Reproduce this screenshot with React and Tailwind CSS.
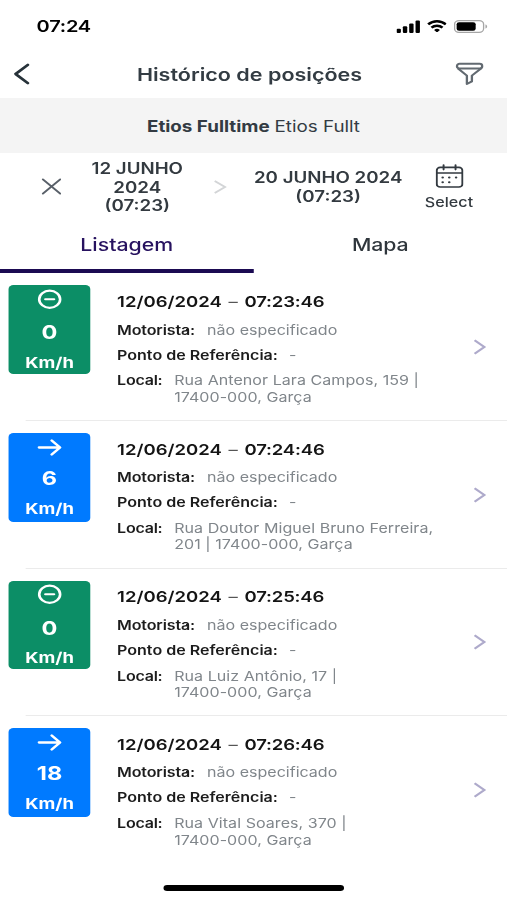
const ROWS = [
  { time: '07:23:46', speed: 0, place: ['Rua Antenor Lara Campos, 159 |', '17400-000, Garça'] },
  { time: '07:24:46', speed: 6, place: ['Rua Doutor Miguel Bruno Ferreira,', '201 | 17400-000, Garça'] },
  { time: '07:25:46', speed: 0, place: ['Rua Luiz Antônio, 17 |', '17400-000, Garça'] },
  { time: '07:26:46', speed: 18, place: ['Rua Vital Soares, 370 |', '17400-000, Garça'] },
];

function StatusBar() {
  return (
    <div className="flex h-[52px] items-center justify-between pl-[30px] pr-[16px] text-black">
      <span className="pt-px text-[16.4px] font-semibold tracking-[-0.2px]">07:24</span>
      <div className="flex items-center gap-[5.3px]">
        <svg className="h-[13px] w-[19.5px]" viewBox="0 0 19.5 12" fill="currentColor" preserveAspectRatio="none">
          <rect x="0" y="8" width="3.6" height="4" rx="1" />
          <rect x="5.2" y="5.8" width="3.6" height="6.2" rx="1" />
          <rect x="10.4" y="3.2" width="3.6" height="8.8" rx="1" />
          <rect x="15.6" y="0.4" width="3.6" height="11.6" rx="1" />
        </svg>
        <svg className="h-[12.5px] w-[16.4px]" viewBox="0 0 17 12" fill="none" stroke="currentColor" strokeWidth="2.3" preserveAspectRatio="none">
          <path d="M1 4.3a10.7 10.7 0 0 1 15 0" />
          <path d="M3.8 7.4a6.7 6.7 0 0 1 9.4 0" />
          <path d="M8.5 12 6 9.7a3.5 3.5 0 0 1 5 0Z" fill="currentColor" stroke="none" />
        </svg>
        <svg className="h-[13px] w-[28px]" viewBox="0 0 28 13">
          <rect x="0.6" y="0.6" width="23.8" height="11.8" rx="3.6" fill="none" stroke="#a6a6a6" strokeWidth="1.1" />
          <rect x="2.3" y="2.3" width="15.6" height="8.4" rx="2" fill="#000" />
          <path d="M25.9 4.4v4.2c.9-.4 1.4-1.1 1.4-2.1s-.5-1.7-1.4-2.1Z" fill="#a6a6a6" />
        </svg>
      </div>
    </div>
  );
}

function Header() {
  return (
    <div className="flex h-[46px] items-center justify-between pb-[2px] pl-[10.5px] pr-[18.5px]">
      <svg className="h-[22px] w-[14px]" viewBox="0 0 14 22" fill="none" stroke="#27323a" strokeWidth="2.5" strokeLinecap="round" strokeLinejoin="round">
        <path d="M11.8 1.8 1.8 11l10 9.2" />
      </svg>
      <h1 className="ml-[11.5px] pt-[1.5px] text-[17.65px] font-semibold text-[#333c43]">Histórico de posições</h1>
      <svg className="h-[24px] w-[24px]" viewBox="0 0 24 24" fill="none" stroke="#626a71" strokeWidth="1.9" strokeLinejoin="round">
        <rect x="1.6" y="1.8" width="20.6" height="4.7" rx="2.1" />
        <path d="M2.2 6.2 9.7 13.6v8.4l4.1-2.6v-5.8l7.7-7.4" />
      </svg>
    </div>
  );
}

function Period() {
  return (
    <div className="flex h-[71px] text-[15.35px] font-semibold leading-[18.6px] text-[#333a40]">
      <div className="flex w-[65px] items-center justify-end pr-[15px]">
        <svg className="mt-[-4px] h-[17px] w-[16.5px]" viewBox="0 0 17 17" stroke="#596069" strokeWidth="1.8" strokeLinecap="round">
          <path d="m1.2 1.2 14.6 14.6M15.8 1.2 1.2 15.8" />
        </svg>
      </div>
      <div className="w-[95px] pt-[7px] text-center">12 JUNHO<br />2024<br />(07:23)</div>
      <div className="flex w-[41px] items-center justify-center pb-[4px]">
        <svg className="h-[14px] w-[11px]" viewBox="0 0 11 14" fill="none" stroke="#d3d5d7" strokeWidth="1.7">
          <path d="m1 1 8.5 6L1 13" />
        </svg>
      </div>
      <div className="w-[136px] pt-[16px] text-center">20 JUNHO 2024<br />(07:23)</div>
      <div className="flex w-[62px] flex-col items-center pt-[11px]">
        <svg className="h-[24px] w-[23px]" viewBox="0 0 23 24" fill="none" stroke="#333a40" strokeWidth="1.6" strokeLinecap="round">
          <rect x="1" y="3.4" width="21" height="19.6" rx="2.8" />
          <path d="M1.2 9h20.6M6.6 1v4.6M16.4 1v4.6" />
          <path d="M5.8 13.4h.1M11.2 13.4h.1M16.8 13.4h.1M5.8 18.2h.1M11.2 18.2h.1" strokeWidth="2" />
        </svg>
        <span className="mt-[5px] text-[13.2px] font-medium tracking-[0.05px]">Select</span>
      </div>
    </div>
  );
}

function Badge({ speed }) {
  const moving = speed > 0;
  return (
    <div className={`flex h-[88.5px] w-[66.4px] shrink-0 flex-col items-center rounded-[4px] text-white ${moving ? 'bg-[#007aff]' : 'bg-[#0c8e66]'}`}>
      <svg className="mt-[3.5px] h-[22px] w-[22px]" viewBox="0 0 22 22" fill="none" stroke="currentColor" strokeWidth="2.3" strokeLinecap="round" strokeLinejoin="round">
        {moving ? (
          <path d="M2 10.5h16.6M12.4 3.5l6.8 7-6.8 7" />
        ) : (
          <>
            <circle cx="10.7" cy="11" r="9.2" />
            <path d="M6.9 11h7.6" />
          </>
        )}
      </svg>
      <span className={`text-[19.3px] font-bold leading-[24px] ${moving ? 'mt-[7.5px]' : 'mt-[11px]'}`}>{speed}</span>
      <span className="mt-[7.5px] text-[15.1px] font-bold leading-[22px]">Km/h</span>
    </div>
  );
}

function Row({ row, last }) {
  return (
    <li className="relative flex h-[147.67px] pl-[7.4px] pt-[12.2px]">
      <Badge speed={row.speed} />
      <div className="ml-[22.2px] flex-1 text-[13.15px] text-[#80868b]">
        <p className="mt-[6.5px] flex text-[15.2px] font-semibold leading-[20px] text-[#141414]">
          <span>12/06/2024</span>
          <span className="w-[18.5px] text-center font-normal text-[#555]">–</span>
          <span className="tracking-[-0.15px]">{row.time}</span>
        </p>
        <p className="mt-[8.4px] flex h-[20px] items-center">
          <span className="w-[73.8px] font-semibold tracking-[-0.12px] text-[#1c1c1c]">Motorista:</span>não especificado
        </p>
        <p className="mt-[5px] flex h-[20px] items-center">
          <span className="w-[141px] font-semibold text-[#1c1c1c]">Ponto de Referência:</span>-
        </p>
        <div className="mt-[7px] flex leading-[16.4px]">
          <span className="w-[46.8px] shrink-0 font-semibold tracking-[-0.2px] text-[#1c1c1c]">Local:</span>
          <span className="whitespace-nowrap tracking-[0.04px]">{row.place[0]}<br />{row.place[1]}</span>
        </div>
      </div>
      <svg className="mr-[17px] mt-[53.5px] h-[16px] w-[10.5px]" viewBox="0 0 10.5 16" fill="none" stroke="#aeaacb" strokeWidth="2">
        <path d="m1 1.2 8 6.8-8 6.8" />
      </svg>
      {!last && <div className="absolute bottom-0 left-[20.5px] right-0 h-px bg-[#ebebeb]" />}
    </li>
  );
}

export default function App() {
  return (
    <div className="h-[900px] w-[507px] overflow-hidden bg-white">
      <div className="flex h-[900px] w-[415.57px] origin-left scale-x-[1.22] flex-col font-['Inter',sans-serif]">
        <StatusBar />
        <Header />
        <div className="flex h-[55px] items-center justify-center gap-[4px] bg-[#f4f4f4] pt-[2px] text-[15.4px] text-[#333b43]">
          <b>Etios Fulltime</b>
          <span>Etios Fullt</span>
        </div>
        <Period />
        <div className="flex h-[49.3px] text-[17.45px] font-medium leading-[26px]">
          <div className="h-full w-1/2 border-b-[4.6px] border-[#1b0a52] pt-[8px] text-center text-[#27125f]">Listagem</div>
          <div className="h-full w-1/2 pt-[8px] text-center tracking-[-0.1px] text-[#2f363c]">Mapa</div>
        </div>
        <ul>
          {ROWS.map((row, i) => (
            <Row key={row.time} row={row} last={i === ROWS.length - 1} />
          ))}
        </ul>
        <div className="mx-auto mt-[21px] h-[6px] w-[148px] rounded-full bg-black" />
      </div>
    </div>
  );
}
